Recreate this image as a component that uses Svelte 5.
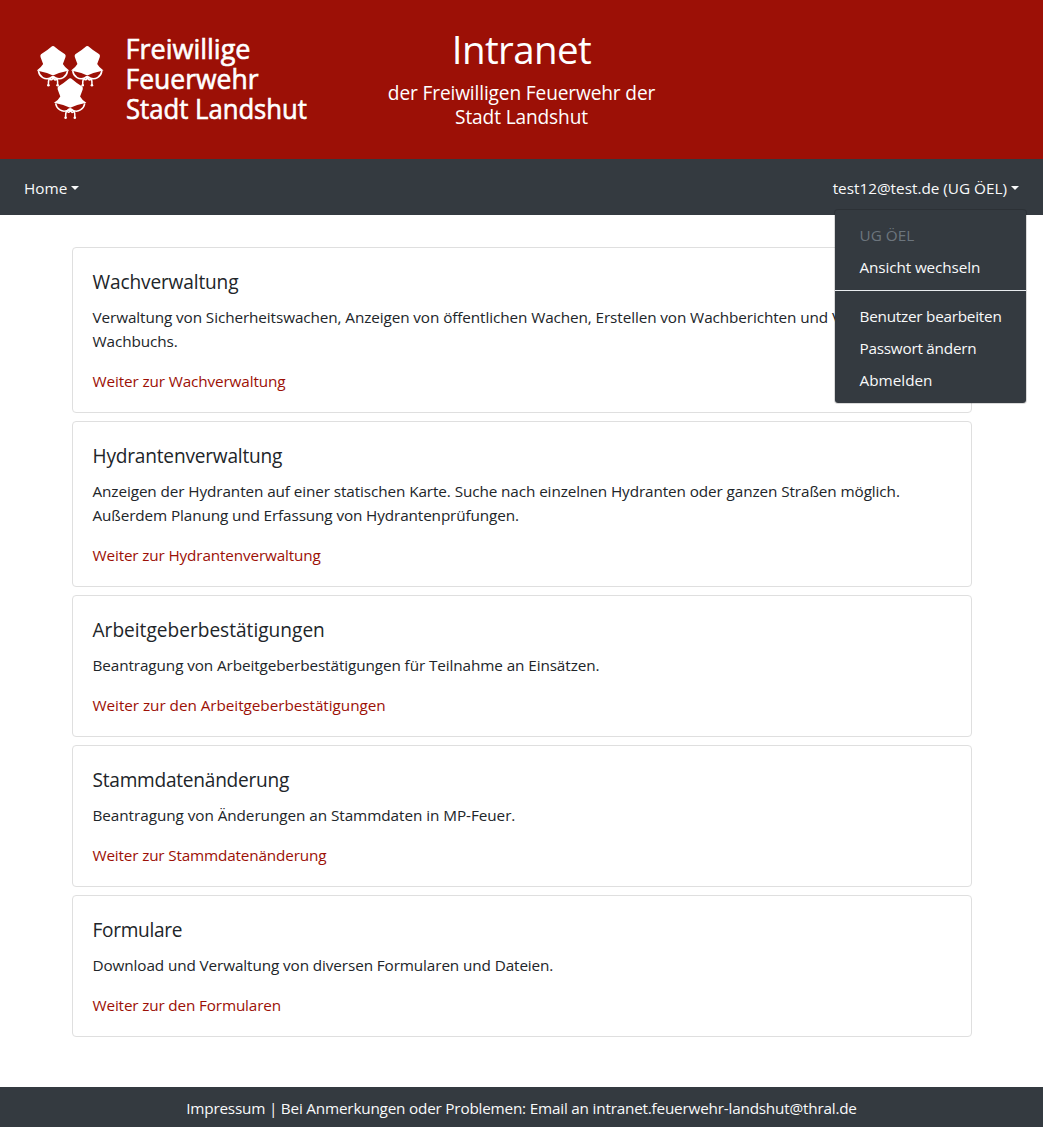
<script>
  // Each text carries its own tracking, in pixels.
  const cards = [
    {
      title: ['Wachverwaltung', -0.15],
      lines: [
        ['Verwaltung von Sicherheitswachen, Anzeigen von öffentlichen Wachen, Erstellen von Wachberichten und V', -0.1],
        ['Wachbuchs.', -0.1]
      ],
      link: ['Weiter zur Wachverwaltung', -0.13]
    },
    {
      title: ['Hydrantenverwaltung', -0.2],
      lines: [
        ['Anzeigen der Hydranten auf einer statischen Karte. Suche nach einzelnen Hydranten oder ganzen Straßen möglich.', -0.1],
        ['Außerdem Planung und Erfassung von Hydrantenprüfungen.', -0.12]
      ],
      link: ['Weiter zur Hydrantenverwaltung', -0.15]
    },
    {
      title: ['Arbeitgeberbestätigungen', 0],
      lines: [['Beantragung von Arbeitgeberbestätigungen für Teilnahme an Einsätzen.', -0.1]],
      link: ['Weiter zur den Arbeitgeberbestätigungen', -0.05]
    },
    {
      title: ['Stammdatenänderung', -0.25],
      lines: [['Beantragung von Änderungen an Stammdaten in MP-Feuer.', -0.06]],
      link: ['Weiter zur Stammdatenänderung', -0.17]
    },
    {
      title: ['Formulare', -0.3],
      lines: [['Download und Verwaltung von diversen Formularen und Dateien.', -0.11]],
      link: ['Weiter zur den Formularen', -0.16]
    }
  ];
</script>

<div class="page">
  <header>
    <svg class="logo" width="300" height="100" viewBox="30 30 300 100" aria-label="Freiwillige Feuerwehr Stadt Landshut">
      <defs>
        <g id="hat">
          <path d="M-1 0.2 Q0 -0.4 1 0.2 Q6 4.6 12 8.2 Q13 9.2 12.5 11 L9.9 18 Q12 21.8 16.2 24.4 Q8 25.9 0 29.4 Q-8 25.9 -16.2 24.4 Q-12 21.8 -9.9 18 L-12.5 11 Q-13 9.2 -12 8.2 Q-6 4.6 -1 0.2 Z" fill="#fff" />
          <path d="M-14.6 25 C-13.5 31 -8 34.2 -2.8 32 Q0 29.5 2.6 32 Q4 34 2 34 Q-1 30.5 -3.6 32.6 C-5 35 -4.4 37 -4.6 39.5 M14.6 25 C13.5 31 8 34.2 2.8 32 Q0 29.5 -2.6 32 Q-3 34.4 -1 33.6 Q2 30.5 4 32.8 C5 35 4.6 37 4.6 39.5" fill="none" stroke="#fff" stroke-width="1.5" />
          <circle cx="-4.6" cy="39.3" r="1.3" fill="#fff" />
          <circle cx="4.6" cy="39.3" r="1.3" fill="#fff" />
        </g>
      </defs>
      <use href="#hat" x="53" y="46" />
      <use href="#hat" x="87.3" y="46" />
      <use href="#hat" x="70.2" y="78.4" />
      <g class="logotext">
        <text x="125.5" y="59.3" textLength="125" lengthAdjust="spacingAndGlyphs">Freiwillige</text>
        <text x="125.5" y="89.2" textLength="133" lengthAdjust="spacingAndGlyphs">Feuerwehr</text>
        <text x="126" y="118.8" textLength="181" lengthAdjust="spacingAndGlyphs">Stadt Landshut</text>
      </g>
    </svg>
    <div class="heading">
      <h1>Intranet</h1>
      <h2>der Freiwilligen Feuerwehr der<br />Stadt Landshut</h2>
    </div>
  </header>

  <nav>
    <span class="toggle">Home</span>
    <div class="user">
      <span class="toggle">test12@test.de (UG ÖEL)</span>
      <div class="menu">
        <span class="disabled">UG ÖEL</span>
        <span class="snug">Ansicht wechseln</span>
        <hr />
        <span class="tight">Benutzer bearbeiten</span>
        <span class="tight">Passwort ändern</span>
        <span>Abmelden</span>
      </div>
    </div>
  </nav>

  <main>
    {#each cards as { title, lines, link }}
      <section>
        <h3 style:letter-spacing="{title[1]}px">{title[0]}</h3>
        <p>
          {#each lines as [text, tracking]}
            <span class="line" style:letter-spacing="{tracking}px">{text}</span>
          {/each}
        </p>
        <a href="#top" style:letter-spacing="{link[1]}px">{link[0]}</a>
      </section>
    {/each}
  </main>

  <footer>Impressum | Bei Anmerkungen oder Problemen: Email an intranet.feuerwehr-landshut@thral.de</footer>
</div>

<style>
  :global(body) {
    margin: 0;
    background: #fff;
  }
  .page {
    display: flex;
    flex-direction: column;
    height: 1127px;
    font: 15.3px/24px 'Open Sans', 'Noto Sans', sans-serif;
    color: #212529;
  }
  header {
    display: grid;
    grid-template-columns: 1fr 300px 1fr;
    height: 159px;
    flex: none;
    background: #9c1006;
    color: #fff;
  }
  .logo {
    margin: 30px 0 0 30px;
    overflow: visible;
  }
  .logotext {
    font: 500 26.5px 'Open Sans', sans-serif;
    fill: #fff;
    stroke: #fff;
    stroke-width: 0.6px;
  }
  .heading {
    padding-top: 25px;
    text-align: center;
  }
  h1, h2, h3 {
    margin: 0;
    font-weight: 400;
  }
  h1 {
    margin-bottom: 8px;
    font-size: 38.5px;
    line-height: 48px;
    letter-spacing: -0.6px;
  }
  h2 {
    font-size: 19.1px;
    line-height: 24px;
    letter-spacing: -0.13px;
    white-space: nowrap;
  }
  nav {
    display: flex;
    flex: none;
    justify-content: space-between;
    align-items: center;
    box-sizing: border-box;
    height: 56px;
    padding: 2px 24px 0;
    background: #343a40;
    color: #f8f9fa;
  }
  .toggle {
    display: flex;
    align-items: center;
    white-space: nowrap;
  }
  .toggle::after {
    content: '';
    margin-left: 4px;
    border: 4.8px solid transparent;
    border-top-color: currentColor;
    border-bottom: 0;
  }
  .user {
    position: relative;
  }
  .menu {
    position: absolute;
    top: 33px;
    right: -8px;
    box-sizing: border-box;
    width: 193px;
    padding: 8px 0;
    border: 1px solid rgba(0, 0, 0, 0.15);
    border-radius: 4px;
    background: #343a40;
    background-clip: padding-box;
  }
  .menu span {
    display: block;
    padding: 5px 24px 3px 24.5px;
    white-space: nowrap;
  }
  .menu .disabled {
    color: #6c757d;
  }
  .snug {
    letter-spacing: -0.12px;
  }
  .tight {
    letter-spacing: -0.24px;
  }
  hr {
    height: 1px;
    margin: 8px 0;
    border: 0;
    background: #e9ecef;
  }
  main {
    display: flex;
    flex: 1;
    flex-direction: column;
    gap: 8px;
    width: 900px;
    margin: 32px 0 0 72px;
  }
  section {
    padding: 20px 20px 19px 19.5px;
    border: 1px solid #dfdfdf;
    border-radius: 4px;
  }
  h3 {
    margin: 2px 0 11px;
    font-size: 19.1px;
    line-height: 24px;
  }
  p {
    margin: 0 0 16px;
  }
  .line {
    display: block;
    white-space: nowrap;
  }
  a {
    display: block;
    color: #9c1006;
    text-decoration: none;
  }
  footer {
    flex: none;
    height: 40px;
    line-height: 42px;
    letter-spacing: -0.205px;
    background: #343a40;
    color: #f8f9fa;
    text-align: center;
  }
</style>
